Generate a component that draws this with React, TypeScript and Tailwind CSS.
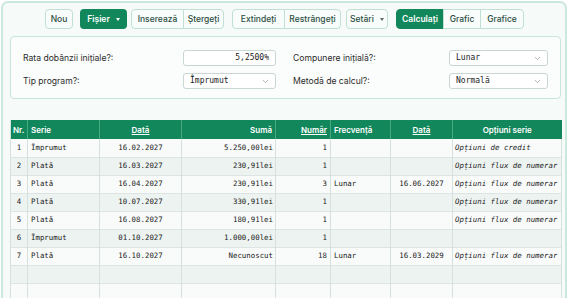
import React from "react";
import { ChevronDown } from "lucide-react";

const sans = "font-['Inter','Liberation_Sans',sans-serif]";
const mono = "font-['DejaVu_Sans_Mono','Liberation_Mono',monospace]";

type Row = {
  nr: string;
  serie: string;
  data: string;
  suma: string;
  numar: string;
  frecventa: string;
  data2: string;
  optiuni: string;
};

const rows: Row[] = [
  { nr: "1", serie: "Împrumut", data: "16.02.2027", suma: "5.250,00lei", numar: "1", frecventa: "", data2: "", optiuni: "Opțiuni de credit" },
  { nr: "2", serie: "Plată", data: "16.03.2027", suma: "230,91lei", numar: "1", frecventa: "", data2: "", optiuni: "Opțiuni flux de numerar" },
  { nr: "3", serie: "Plată", data: "16.04.2027", suma: "230,91lei", numar: "3", frecventa: "Lunar", data2: "16.06.2027", optiuni: "Opțiuni flux de numerar" },
  { nr: "4", serie: "Plată", data: "10.07.2027", suma: "330,91lei", numar: "1", frecventa: "", data2: "", optiuni: "Opțiuni flux de numerar" },
  { nr: "5", serie: "Plată", data: "16.08.2027", suma: "180,91lei", numar: "1", frecventa: "", data2: "", optiuni: "Opțiuni flux de numerar" },
  { nr: "6", serie: "Împrumut", data: "01.10.2027", suma: "1.000,00lei", numar: "1", frecventa: "", data2: "", optiuni: "" },
  { nr: "7", serie: "Plată", data: "16.10.2027", suma: "Necunoscut", numar: "18", frecventa: "Lunar", data2: "16.03.2029", optiuni: "Opțiuni flux de numerar" },
  { nr: "", serie: "", data: "", suma: "", numar: "", frecventa: "", data2: "", optiuni: "" },
  { nr: "", serie: "", data: "", suma: "", numar: "", frecventa: "", data2: "", optiuni: "" },
];

const Caret = ({ white = false }) => (
  <span
    className={`ml-[6px] inline-block w-0 h-0 border-l-[2.5px] border-r-[2.5px] border-t-[3px] border-l-transparent border-r-transparent ${
      white ? "border-t-white" : "border-t-[#5b6b66]"
    }`}
  />
);

const Btn = ({ children, w, className = "" }: { children: React.ReactNode; w: string; className?: string }) => (
  <button
    className={`h-[20px] ${w} flex items-center justify-center border border-[#bfe0d3] bg-[#f8fcfa] text-[#2c4f44] text-[8.5px] font-medium ${className}`}
  >
    {children}
  </button>
);

const SelectBox = ({ value, w }: { value: string; w: string }) => (
  <div
    className={`h-[16px] ${w} flex items-center justify-between pl-[6px] pr-[5px] bg-white border border-[#c9d6d1] rounded-[3px] ${mono} text-[8px] text-[#222]`}
  >
    <span>{value}</span>
    <ChevronDown size={9} strokeWidth={1.5} className="text-[#777]" />
  </div>
);

export default function App() {
  const th = "border-r border-[#48a981] px-[3px] font-semibold text-white text-[8px] h-[19px]";
  const td = "border-r border-[#d6e0dd] h-[18px] text-[7.4px] text-[#222]";

  return (
    <div className={`w-[570px] h-[298px] overflow-hidden bg-white ${sans}`}>
      <div className="ml-[1px] mt-[1px] w-[566px] h-[310px] border-2 border-[#cbe8dc] rounded-[7px] bg-[#f6fbf9] pt-[6px] px-[7px]">
        {/* toolbar */}
        <div className="flex items-center justify-center pl-[1px]">
          <Btn w="w-[28px]" className="rounded-[4px]">Nou</Btn>
          <button className="ml-[7px] h-[20px] w-[47px] flex items-center justify-center rounded-[4px] bg-[#12875b] text-white text-[8.5px] font-semibold">
            Fișier
            <Caret white />
          </button>
          <div className="ml-[4px] flex">
            <Btn w="w-[53px]" className="rounded-l-[4px]">Inserează</Btn>
            <Btn w="w-[41px]" className="-ml-px rounded-r-[4px]">Ștergeți</Btn>
          </div>
          <div className="ml-[8px] flex">
            <Btn w="w-[53px]" className="rounded-l-[4px]">Extindeți</Btn>
            <Btn w="w-[57px]" className="-ml-px rounded-r-[4px]">Restrângeți</Btn>
          </div>
          <Btn w="w-[42px]" className="ml-[5px] rounded-[4px]">
            Setări
            <Caret />
          </Btn>
          <div className="ml-[8px] flex">
            <button className="h-[20px] w-[48px] flex items-center justify-center rounded-l-[4px] bg-[#12875b] border border-[#12875b] text-white text-[8.5px] font-semibold">
              Calculați
            </button>
            <Btn w="w-[38px]" className="-ml-px">Grafic</Btn>
            <Btn w="w-[44px]" className="-ml-px rounded-r-[4px]">Grafice</Btn>
          </div>
        </div>

        {/* settings */}
        <div className="mt-[7px] w-[551px] border border-[#c8e5da] rounded-[4px] bg-[#fbfdfc] pt-[13px] pb-[9px] pl-[12px] pr-[12px] grid grid-cols-[253px_1fr] gap-x-[17px] gap-y-[7px] text-[8.6px] text-[#2b2b2b]">
          <div className="flex items-center justify-between">
            <span>Rata dobânzii inițiale?:</span>
            <div className={`h-[16px] w-[93px] flex items-center justify-end pr-[6px] bg-white border border-[#c9d6d1] rounded-[3px] ${mono} text-[8px] text-[#222]`}>
              5,2500%
            </div>
          </div>
          <div className="flex items-center justify-between">
            <span>Compunere inițială?:</span>
            <SelectBox value="Lunar" w="w-[99px]" />
          </div>
          <div className="flex items-center justify-between">
            <span>Tip program?:</span>
            <SelectBox value="Împrumut" w="w-[93px]" />
          </div>
          <div className="flex items-center justify-between">
            <span>Metodă de calcul?:</span>
            <SelectBox value="Normală" w="w-[99px]" />
          </div>
        </div>

        {/* table */}
        <table className="mt-[21px] w-[551px] table-fixed border-collapse border-l border-[#d6e0dd]">
          <colgroup>
            <col className="w-[17px]" />
            <col className="w-[72px]" />
            <col className="w-[82px]" />
            <col className="w-[94px]" />
            <col className="w-[55px]" />
            <col className="w-[60px]" />
            <col className="w-[62px]" />
            <col className="w-[109px]" />
          </colgroup>
          <thead>
            <tr className="bg-[#12875b]">
              <th className={`${th} text-left !px-[2px]`}>Nr.</th>
              <th className={`${th} text-left`}>Serie</th>
              <th className={`${th} text-center`}><span className="underline">Dată</span></th>
              <th className={`${th} text-right`}>Sumă</th>
              <th className={`${th} text-right`}><span className="underline">Număr</span></th>
              <th className={`${th} text-left`}>Frecvență</th>
              <th className={`${th} text-center`}><span className="underline">Dată</span></th>
              <th className={`${th} text-center border-r-0`}>Opțiuni serie</th>
            </tr>
          </thead>
          <tbody className={mono}>
            {rows.map((r, i) => (
              <tr key={i} className={`border-b border-[#dde5e2] ${i % 2 === 0 ? "bg-[#f9fbfb]" : "bg-[#edf3f1]"}`}>
                <td className={`${td} text-center`}>{r.nr}</td>
                <td className={`${td} text-left pl-[3px]`}>{r.serie}</td>
                <td className={`${td} text-center`}>{r.data}</td>
                <td className={`${td} text-right pr-[2px]`}>{r.suma}</td>
                <td className={`${td} text-right pr-[3px]`}>{r.numar}</td>
                <td className={`${td} text-left pl-[3px]`}>{r.frecventa}</td>
                <td className={`${td} text-center`}>{r.data2}</td>
                <td className={`${td} text-left pl-[2px] italic whitespace-nowrap overflow-hidden`}>{r.optiuni}</td>
              </tr>
            ))}
          </tbody>
        </table>
      </div>
    </div>
  );
}
